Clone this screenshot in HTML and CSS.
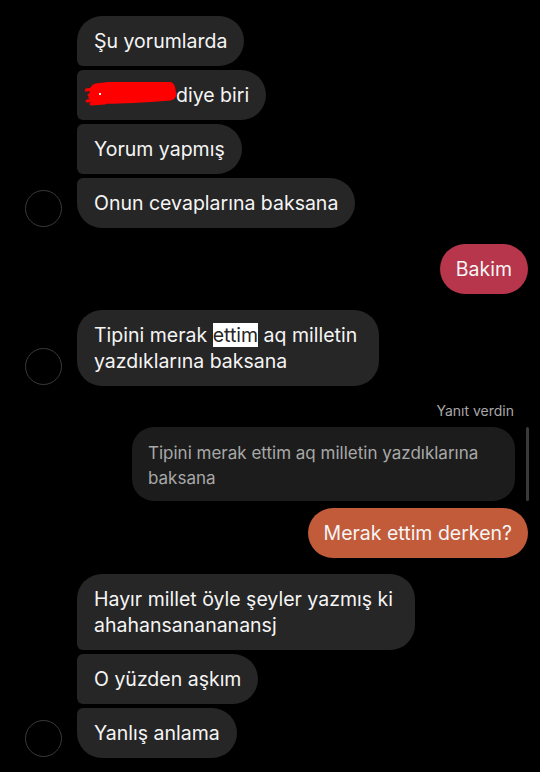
FILE: index.html
```html
<!DOCTYPE html>
<html lang="tr">
<head>
    <meta charset="UTF-8">
    <meta name="viewport" content="width=device-width, initial-scale=1.0">
    <title>Sohbet</title>
    <link rel="stylesheet" href="styles.css">
</head>
<body>
    <div class="chat">
        <div class="group">
            <div class="avatar"></div>
            <div class="stack">
                <div class="bubble first">Şu yorumlarda</div>
                <div class="bubble middle"><svg class="scribble" width="92" height="26" viewBox="0 0 92 26">
                    <path d="M12 9 C30 6, 60 5, 83 7" stroke="#ff0000" stroke-width="15" stroke-linecap="round" fill="none"/>
                    <path d="M10 15 C30 16, 60 14, 85 12" stroke="#ff0000" stroke-width="13" stroke-linecap="round" fill="none"/>
                    <path d="M1 8 L16 6 M2 19 L17 18 M4 13 L12 13 M6 22 L20 21" stroke="#ff0000" stroke-width="3" stroke-linecap="round" fill="none"/>
                    <rect x="14" y="11" width="2" height="2" fill="#ffffff"/>
                </svg>diye biri</div>
                <div class="bubble middle">Yorum yapmış</div>
                <div class="bubble last">Onun cevaplarına baksana</div>
            </div>
        </div>

        <div class="mine">
            <div class="bubble single red">Bakim</div>
        </div>

        <div class="group">
            <div class="avatar"></div>
            <div class="stack">
                <div class="bubble single wide">Tipini merak <span class="selected">ettim</span> aq milletin<br>yazdıklarına baksana</div>
            </div>
        </div>

        <div class="reply">
            <div class="reply-label">Yanıt verdin</div>
            <div class="quote-row">
                <div class="quote">Tipini merak ettim aq milletin yazdıklarına baksana</div>
                <div class="quote-bar"></div>
            </div>
            <div class="mine">
                <div class="bubble single orange">Merak ettim derken?</div>
            </div>
        </div>

        <div class="group">
            <div class="avatar"></div>
            <div class="stack">
                <div class="bubble first wide">Hayır millet öyle şeyler yazmış ki<br>ahahansanananansj</div>
                <div class="bubble middle">O yüzden aşkım</div>
                <div class="bubble last">Yanlış anlama</div>
            </div>
        </div>
    </div>
</body>
</html>
```

FILE: styles.css
```css
body {
    margin: 0;
    background-color: #000;
    color: #f5f5f5;
    font-family: Inter, "Noto Sans", sans-serif;
}
.chat {
    display: flex;
    flex-direction: column;
    gap: 16px;
    padding-top: 16px;
}
.group {
    display: flex;
    align-items: flex-end;
    gap: 15px;
    padding-left: 25px;
}
.avatar {
    width: 35px;
    height: 35px;
    border: 1px solid #3a3a3a;
    border-radius: 50%;
    margin-bottom: 1px;
    flex-shrink: 0;
}
.stack {
    display: flex;
    flex-direction: column;
    align-items: flex-start;
    gap: 4px;
}
.bubble {
    background-color: #262626;
    font-size: 19.5px;
    line-height: 26px;
    padding: 12px 17px;
    white-space: nowrap;
}
.wide {
    padding-right: 22px;
}
.single {
    border-radius: 25px;
}
.first {
    border-radius: 25px 25px 25px 6px;
}
.middle {
    border-radius: 6px 25px 25px 6px;
}
.last {
    border-radius: 6px 25px 25px 25px;
}
.scribble {
    vertical-align: -6px;
    margin-left: -9px;
    margin-right: -1px;
}
.selected {
    background-color: #fff;
    color: #262626;
}
.mine {
    display: flex;
    justify-content: flex-end;
    padding-right: 12px;
}
.red {
    background-color: #b8364b;
    padding: 12px 16px;
}
.orange {
    background-color: #c25b3a;
    padding: 12px 16px;
}
.reply {
    display: flex;
    flex-direction: column;
    align-items: stretch;
    gap: 7px;
}
.reply-label {
    align-self: flex-end;
    margin-right: 26px;
    font-size: 14px;
    line-height: 18px;
    color: #a8a8a8;
}
.quote-row {
    display: flex;
    justify-content: flex-end;
    align-items: stretch;
    gap: 11px;
    padding-right: 11px;
}
.quote {
    box-sizing: border-box;
    max-width: 383px;
    background-color: #1c1c1c;
    color: #a8a8a8;
    font-size: 17px;
    line-height: 25px;
    padding: 14px 16px 10px;
    border-radius: 22px;
}
.quote-bar {
    width: 3px;
    background-color: #3a3a3a;
    border-radius: 2px;
}
```
